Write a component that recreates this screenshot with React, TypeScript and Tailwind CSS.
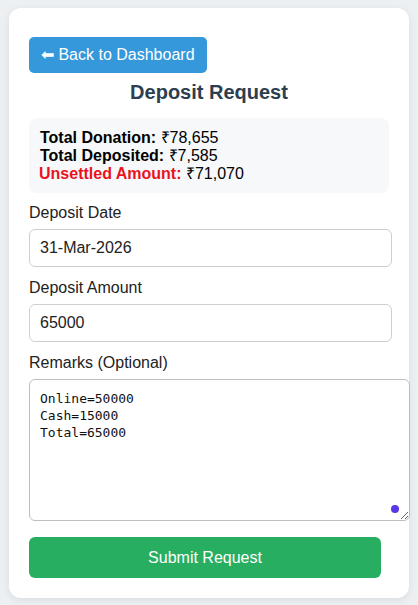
export default function App() {
  return (
    <div className="min-h-[605px] bg-[#edf0f3] pt-[8px] px-[9px] font-['Liberation_Sans',Arial,sans-serif] text-[16px] text-[#222]">
      <div className="w-[400px] h-[590px] bg-white rounded-[12px] shadow-[0_2px_8px_rgba(0,0,0,0.08)] px-[20px] pt-[29px]">
        <button className="h-[36px] px-[12px] bg-[#3498db] text-white rounded-[5px] leading-[18px]">
          ⬅ Back to Dashboard
        </button>
        <h2 className="mt-[8px] text-center text-[20px] font-bold text-[#2c3e50] leading-[23px]">
          Deposit Request
        </h2>
        <div className="mt-[14px] bg-[#f6f8fa] rounded-[8px] px-[10px] pt-[11px] pb-[10px] leading-[18px] text-black">
          <div className="pl-[1px]"><b>Total Donation:</b> ₹78,655</div>
          <div className="pl-[1px]"><b>Total Deposited:</b> ₹7,585</div>
          <div><b className="text-[#e8131c]">Unsettled Amount:</b> ₹71,070</div>
        </div>

        <label className="block mt-[11px] mb-[7px] leading-[18px]">Deposit Date</label>
        <input
          readOnly
          value="31-Mar-2026"
          className="block w-[363px] h-[38px] px-[10px] border border-[#cfcfcf] rounded-[6px] outline-none text-[16px] text-[#222]"
        />

        <label className="block mt-[12px] mb-[7px] leading-[18px]">Deposit Amount</label>
        <input
          readOnly
          value="65000"
          className="block w-[363px] h-[38px] px-[10px] border border-[#cfcfcf] rounded-[6px] outline-none text-[16px] text-[#222]"
        />

        <label className="block mt-[12px] mb-[7px] leading-[18px]">Remarks (Optional)</label>
        <div className="relative w-[381px]">
          <textarea
            readOnly
            value={"Online=50000\nCash=15000\nTotal=65000"}
            className="block w-[381px] h-[142px] px-[10px] py-[10px] border border-[#bdbdbd] rounded-[6px] outline-none font-['DejaVu_Sans_Mono',monospace] text-[13px] leading-[17px] text-[#111]"
          />
          <span className="absolute right-[11px] bottom-[8px] w-[8px] h-[8px] rounded-full bg-[#5a36e6]" />
        </div>

        <button className="mt-[16px] w-[352px] h-[41px] bg-[#27ae60] text-white rounded-[6px] text-[16px]">
          Submit Request
        </button>
      </div>
    </div>
  );
}
